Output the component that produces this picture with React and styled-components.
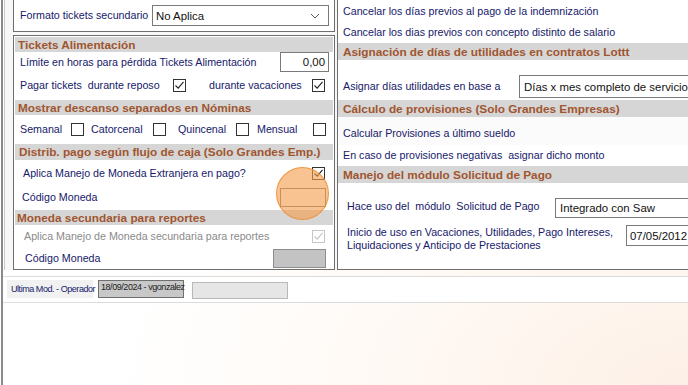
import React from 'react'
import styled, { createGlobalStyle } from 'styled-components'

const GlobalStyle = createGlobalStyle`
    html, body {
        margin: 0;
        padding: 0;
        background: #ffffff;
    }
    body {
        font-family: 'Liberation Sans', Arial, sans-serif;
        font-size: 11px;
    }
`

const Window = styled.div`
    position: relative;
    width: 688px;
    height: 385px;
    overflow: hidden;
    box-sizing: border-box;
    border-left: 2px solid #8a8a8a;
    margin-left: 1px;
    background: radial-gradient(ellipse at 100% 100%, #fdf0e6 0%, #fffaf6 35%, #ffffff 60%);
`

const FormArea = styled.div`
    background: #f7f7f7;
    border-left: 1px solid #c9c9c9;
    margin-left: 1px;
    padding: 0 0 0 8px;
    display: flex;
    flex-direction: column;
`

const Columns = styled.div`
    display: flex;
    gap: 2px;
    height: 270px;
`

const LeftCol = styled.div`
    width: 322px;
    flex: none;
    display: flex;
    flex-direction: column;
    gap: 3px;
`

const Panel = styled.div`
    background: #ffffff;
    border: 1px solid #6e6e6e;
    border-top: ${(p) => (p.$openTop ? 'none' : '1px solid #6e6e6e')};
    border-right: ${(p) => (p.$openRight ? 'none' : '1px solid #6e6e6e')};
    box-sizing: border-box;
    height: ${(p) => p.$h}px;
    flex: ${(p) => (p.$grow ? '1 1 0' : 'none')};
    min-width: 0;
    overflow: hidden;
    display: flex;
    flex-direction: column;
`

const Band = styled.div`
    height: ${(p) => p.$h || 15}px;
    margin: ${(p) => (p.$inset ? '1px 1px 0' : '0')};
    background: #d6d6d6;
    color: #a0552f;
    font-weight: bold;
    font-size: 11.8px;
    display: flex;
    align-items: center;
    padding-left: ${(p) => p.$pad || 4}px;
    white-space: nowrap;
    flex: none;
`

const Row = styled.div`
    height: ${(p) => p.$h}px;
    display: flex;
    align-items: ${(p) => p.$align || 'center'};
    padding-left: ${(p) => p.$pad || 6}px;
    padding-top: ${(p) => p.$pt || 0}px;
    padding-bottom: ${(p) => p.$pb || 0}px;
    background: ${(p) => p.$bg || 'transparent'};
    box-sizing: border-box;
    white-space: nowrap;
    flex: none;
`

const Label = styled.span`
    color: ${(p) => (p.$disabled ? '#8a8a8a' : '#16206a')};
    font-size: 10.7px;
    line-height: 13px;
    margin-left: ${(p) => p.$ml || 0}px;
    margin-top: ${(p) => p.$mt || 0}px;
    align-self: ${(p) => p.$self || 'auto'};
    width: ${(p) => (p.$w ? `${p.$w}px` : 'auto')};
    flex: ${(p) => (p.$grow ? 1 : 'none')};
`

const Box = styled.div`
    box-sizing: border-box;
    width: ${(p) => p.$w}px;
    height: ${(p) => p.$h}px;
    margin-left: ${(p) => p.$ml || 0}px;
    margin-right: ${(p) => p.$mr || 0}px;
    margin-top: ${(p) => p.$mt || 0}px;
    border: 1px solid ${(p) => p.$border || '#7a7a7a'};
    background: ${(p) => p.$bg || '#ffffff'};
    color: #111111;
    font-size: 11.4px;
    display: flex;
    align-items: center;
    justify-content: ${(p) => (p.$right ? 'flex-end' : 'space-between')};
    padding: 0 ${(p) => (p.$right ? 3 : 8)}px 0 ${(p) => p.$pl || 4}px;
    flex: none;
    white-space: nowrap;
`

const Check = styled.div`
    box-sizing: border-box;
    width: 13px;
    height: 13px;
    margin-left: ${(p) => p.$ml || 0}px;
    border: 1px solid ${(p) => (p.$disabled ? '#c6c6c6' : '#333333')};
    background: #ffffff;
    flex: none;
    display: flex;
    align-items: center;
    justify-content: center;
`

const Footer = styled.div`
    display: flex;
    align-items: flex-start;
    gap: 5px;
    border-top: 1px solid #dcdcdc;
    border-bottom: 1px solid #dcdcdc;
    margin-top: 6px;
    height: 27px;
    padding: 3px 0 0 4px;
    box-sizing: border-box;
    background: #ffffff;
`

const FooterLabel = styled.div`
    background: #f1f1f1;
    color: #16206a;
    font-size: 9px;
    letter-spacing: -0.45px;
    white-space: nowrap;
    height: 18px;
    width: 86px;
    display: flex;
    align-items: center;
    padding-left: 4px;
    box-sizing: border-box;
`

const FooterBox = styled.div`
    box-sizing: border-box;
    width: ${(p) => p.$w}px;
    height: ${(p) => p.$h}px;
    margin-top: ${(p) => p.$mt || 0}px;
    margin-left: ${(p) => p.$ml || 0}px;
    background: ${(p) => p.$bg};
    border: 1px solid ${(p) => p.$border};
    color: #222222;
    font-size: 9px;
    letter-spacing: -0.45px;
    line-height: 12px;
    padding: 0 0 0 2px;
    white-space: nowrap;
`

const Highlight = styled.div`
    position: absolute;
    left: 273px;
    top: 167px;
    width: 53px;
    height: 53px;
    border-radius: 50%;
    background: rgba(246, 158, 78, 0.62);
    border: 1px solid rgba(238, 140, 50, 0.8);
    box-sizing: border-box;
    pointer-events: none;
`

const Tick = ({ disabled }) => (
    <svg width="11" height="11" viewBox="0 0 11 11">
        <polyline
            points="1.5,5.5 4.2,8.2 9.5,1.8"
            fill="none"
            stroke={disabled ? '#c6c6c6' : '#222222'}
            strokeWidth="1.1"
        />
    </svg>
)

const Chevron = () => (
    <svg width="10" height="6" viewBox="0 0 10 6">
        <polyline points="1,1 5,5 9,1" fill="none" stroke="#555555" strokeWidth="1" />
    </svg>
)

export default function App() {
    return (
        <Window>
            <GlobalStyle />
            <FormArea>
                <Columns>
                    <LeftCol>
                        <Panel $openTop $h={32}>
                            <Row $h={31} $pad={6}>
                                <Label $w={132}>Formato tickets secundario</Label>
                                <Box $w={177} $h={21} $pl={3}>
                                    <span>No Aplica</span>
                                    <Chevron />
                                </Box>
                            </Row>
                        </Panel>
                        <Panel $h={235}>
                            <Band $inset $h={15} $pad={3}>Tickets Alimentación</Band>
                            <Row $h={20}>
                                <Label $grow>Límite en horas para pérdida Tickets Alimentación</Label>
                                <Box $w={49} $h={20} $right $mr={5}>0,00</Box>
                            </Row>
                            <Row $h={27}>
                                <Label $w={153}>Pagar tickets&nbsp; durante reposo</Label>
                                <Check><Tick /></Check>
                                <Label $w={103} $ml={23}>durante vacaciones</Label>
                                <Check><Tick /></Check>
                            </Row>
                            <Band $inset $h={15} $pad={3}>Mostrar descanso separados en Nóminas</Band>
                            <Row $h={28}>
                                <Label $w={51}>Semanal</Label>
                                <Check />
                                <Label $w={62} $ml={7}>Catorcenal</Label>
                                <Check />
                                <Label $w={58} $ml={12}>Quincenal</Label>
                                <Check />
                                <Label $w={56} $ml={8}>Mensual</Label>
                                <Check />
                            </Row>
                            <Band $inset $h={16} $pad={4}>Distrib. pago según flujo de caja (Solo Grandes Emp.)</Band>
                            <Row $h={26} $pad={9}>
                                <Label $w={289}>Aplica Manejo de Moneda Extranjera en pago?</Label>
                                <Check><Tick /></Check>
                            </Row>
                            <Row $h={23} $pad={8}>
                                <Label $w={258}>Código Moneda</Label>
                                <Box $w={46} $h={19} />
                            </Row>
                            <Band $inset $h={15} $pad={2}>Moneda secundaria para reportes</Band>
                            <Row $h={22} $pad={10}>
                                <Label $disabled $w={288}>Aplica Manejo de Moneda secundaria para reportes</Label>
                                <Check $disabled><Tick disabled /></Check>
                            </Row>
                            <Row $h={22} $pad={11}>
                                <Label $w={248}>Código Moneda</Label>
                                <Box $w={53} $h={19} $bg="#c3c3c3" $border="#8d8d8d" />
                            </Row>
                        </Panel>
                    </LeftCol>
                    <Panel $openTop $openRight $grow $h={270}>
                        <Row $h={22} $pad={5}>
                            <Label>Cancelar los días previos al pago de la indemnización</Label>
                        </Row>
                        <Row $h={21} $pad={5}>
                            <Label>Cancelar los dias previos con concepto distinto de salario</Label>
                        </Row>
                        <Band $h={17} $pad={5}>Asignación de días de utilidades en contratos Lottt</Band>
                        <Row $h={40} $align="flex-end" $pb={2} $pad={5}>
                            <Label $w={176} $self="center" $mt={14}>Asignar días utilidades en base a</Label>
                            <Box $w={200} $h={23}>
                                <span>Días x mes completo de servicio</span>
                            </Box>
                        </Row>
                        <Band $h={17} $pad={5}>Cálculo de provisiones (Solo Grandes Empresas)</Band>
                        <Row $h={28} $pad={5} $pt={4} $bg="#fbfbfb">
                            <Label>Calcular Provisiones a último sueldo</Label>
                        </Row>
                        <Row $h={21} $pad={5}>
                            <Label>En caso de provisiones negativas&nbsp; asignar dicho monto</Label>
                        </Row>
                        <Band $h={17} $pad={5}>Manejo del módulo Solicitud de Pago</Band>
                        <Row $h={37} $align="flex-end" $pb={2} $pad={9}>
                            <Label $w={208} $self="center" $mt={12}>Hace uso del&nbsp; módulo&nbsp; Solicitud de Pago</Label>
                            <Box $w={160} $h={20}>
                                <span>Integrado con Saw</span>
                            </Box>
                        </Row>
                        <Row $h={40} $align="flex-start" $pt={6} $pad={9}>
                            <Label $w={279}>
                                Inicio de uso en Vacaciones, Utilidades, Pago Intereses,
                                <br />
                                Liquidaciones y Anticipo de Prestaciones
                            </Label>
                            <Box $w={80} $h={21} $mt={-1} $pl={3}>
                                <span>07/05/2012</span>
                            </Box>
                        </Row>
                    </Panel>
                </Columns>
            </FormArea>
            <Footer>
                <FooterLabel>Ultima Mod. - Operador</FooterLabel>
                <FooterBox $w={86} $h={18} $bg="#c8c8c8" $border="#6f6f6f">18/09/2024 - vgonzalez</FooterBox>
                <FooterBox $w={96} $h={17} $mt={2} $ml={3} $bg="#e6e6e6" $border="#b9b9b9" />
            </Footer>
            <Highlight />
        </Window>
    )
}
